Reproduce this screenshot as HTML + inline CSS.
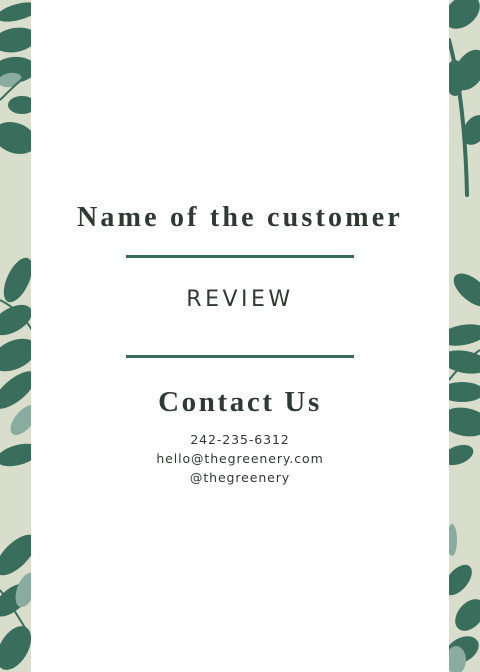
<!DOCTYPE html>
<html><head><style>
body{margin:0;width:480px;height:672px;background:#d9ddcb;position:relative;overflow:hidden}
svg{position:absolute;left:0;top:0}
.panel{position:absolute;left:31px;top:0;width:418px;height:672px;background:#fff}
.t{position:absolute;left:31px;width:418px;text-align:center;color:#2f3a33;white-space:nowrap}
.serif{font-family:"Liberation Serif",serif;font-weight:bold}
.sans{font-family:"DejaVu Sans","Liberation Sans",sans-serif}
.line{position:absolute;left:126px;width:228px;height:3px;background:#3a6b5a}
</style></head><body>
<svg width="480" height="672" viewBox="0 0 480 672">
<g fill="#3a6e5c">
<ellipse cx="18" cy="12" rx="22" ry="8" transform="rotate(-15 18 12)"/>
<ellipse cx="15" cy="40" rx="22" ry="12" transform="rotate(-10 15 40)"/>
<ellipse cx="14" cy="70" rx="22" ry="13" transform="rotate(-5 14 70)"/>
<ellipse cx="22" cy="105" rx="14" ry="9"/>
<ellipse cx="15" cy="138" rx="22" ry="15" transform="rotate(20 15 138)"/>
<ellipse cx="18" cy="280" rx="24" ry="11" transform="rotate(-65 18 280)"/>
<ellipse cx="12" cy="320" rx="22" ry="12" transform="rotate(-30 12 320)"/>
<ellipse cx="14" cy="355" rx="24" ry="14" transform="rotate(-25 14 355)"/>
<ellipse cx="15" cy="390" rx="26" ry="11" transform="rotate(-40 15 390)"/>
<ellipse cx="18" cy="455" rx="22" ry="10" transform="rotate(-15 18 455)"/>
<ellipse cx="16" cy="555" rx="26" ry="12" transform="rotate(-45 16 555)"/>
<ellipse cx="12" cy="600" rx="22" ry="11" transform="rotate(-40 12 600)"/>
<ellipse cx="14" cy="648" rx="24" ry="14" transform="rotate(-60 14 648)"/>
<ellipse cx="462" cy="12" rx="20" ry="14" transform="rotate(-40 462 12)"/>
<ellipse cx="470" cy="70" rx="22" ry="14" transform="rotate(-60 470 70)"/>
<ellipse cx="475" cy="130" rx="16" ry="11" transform="rotate(-60 475 130)"/>
<ellipse cx="455" cy="78" rx="10" ry="18"/>
<ellipse cx="472" cy="290" rx="22" ry="11" transform="rotate(40 472 290)"/>
<ellipse cx="463" cy="335" rx="24" ry="10" transform="rotate(-10 463 335)"/>
<ellipse cx="465" cy="362" rx="24" ry="11" transform="rotate(10 465 362)"/>
<ellipse cx="462" cy="392" rx="22" ry="10"/>
<ellipse cx="465" cy="422" rx="24" ry="14" transform="rotate(10 465 422)"/>
<ellipse cx="458" cy="455" rx="16" ry="9" transform="rotate(-20 458 455)"/>
<ellipse cx="458" cy="580" rx="18" ry="10" transform="rotate(-50 458 580)"/>
<ellipse cx="470" cy="615" rx="18" ry="12" transform="rotate(-50 470 615)"/>
<ellipse cx="462" cy="650" rx="18" ry="12" transform="rotate(-30 462 650)"/>
</g>
<g fill="#8aab9f">
<ellipse cx="10" cy="80" rx="12" ry="7" transform="rotate(-10 10 80)"/>
<ellipse cx="24" cy="420" rx="18" ry="9" transform="rotate(-50 24 420)"/>
<ellipse cx="26" cy="590" rx="18" ry="9" transform="rotate(-70 26 590)"/>
<ellipse cx="452" cy="540" rx="5" ry="16"/>
<ellipse cx="456" cy="660" rx="10" ry="14"/>
</g>
<g stroke="#3a6e5c" stroke-width="2" fill="none">
<path d="M0 100 Q15 85 32 70"/>
<path d="M0 300 Q20 310 32 330"/>
<path d="M0 590 Q15 610 32 640"/>
<path d="M449 40 Q465 100 467 195" stroke-width="4" stroke-linecap="round"/>
<path d="M449 380 Q465 360 480 350"/>
</g>
</svg>
<div class="panel"></div>
<div class="t serif" style="top:202px;font-size:28px;letter-spacing:3.2px">Name of the customer</div>
<div class="line" style="top:255px"></div>
<div class="t sans" style="top:287px;font-size:22px;letter-spacing:3.5px">REVIEW</div>
<div class="line" style="top:355px"></div>
<div class="t serif" style="top:386px;font-size:29px;letter-spacing:2.6px">Contact Us</div>
<div class="t sans" style="top:430px;font-size:12.5px;line-height:19px;letter-spacing:0.9px">242-235-6312<br>hello@thegreenery.com<br>@thegreenery</div>
</body></html>
